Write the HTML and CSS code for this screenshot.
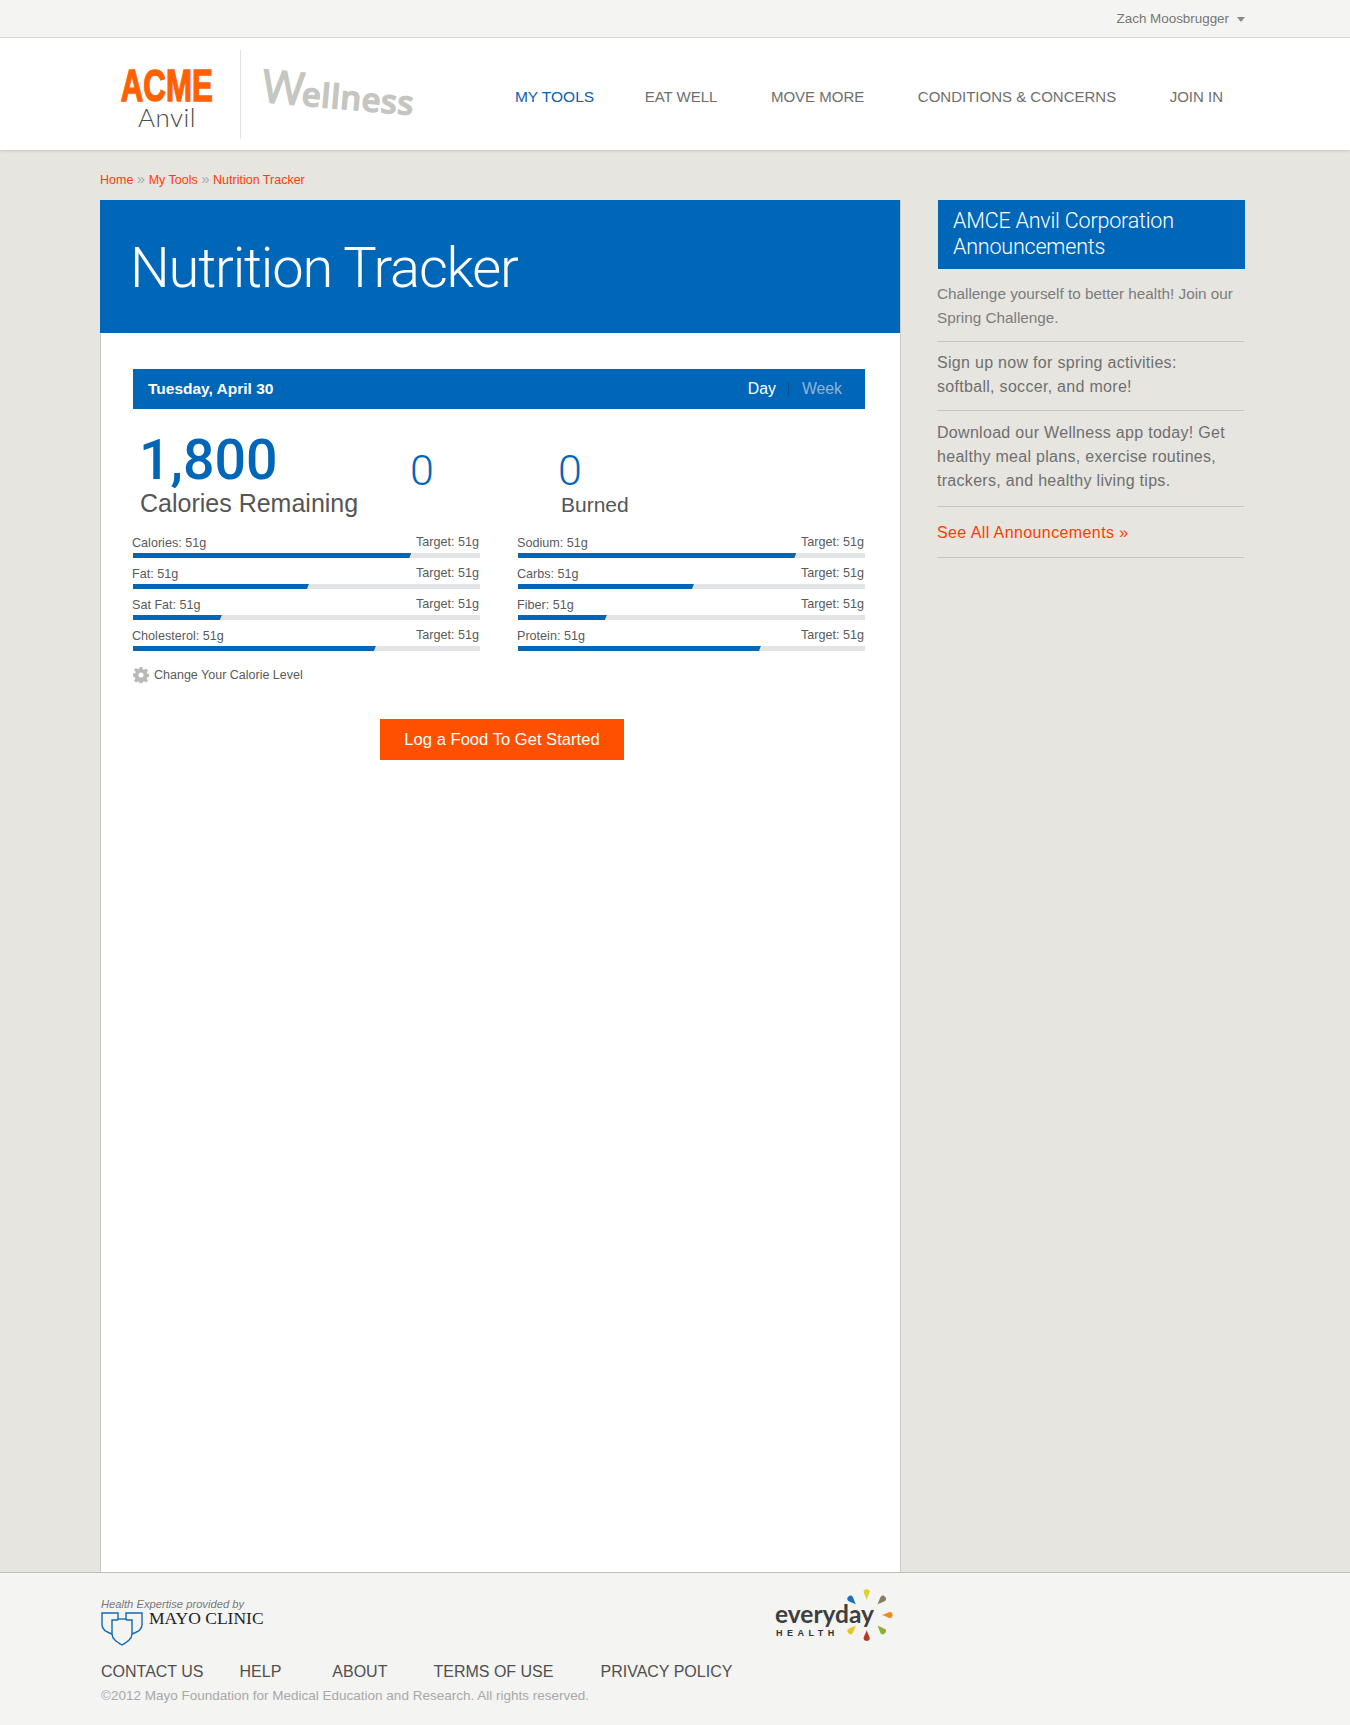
FILE: index.html
```html
<!DOCTYPE html>
<html lang="en">
<head>
<meta charset="utf-8">
<title>Nutrition Tracker</title>
<link rel="stylesheet" href="styles.css">
</head>
<body>
<div class="topbar">
  <span class="user">Zach Moosbrugger</span>
  <span class="caret"></span>
</div>
<header class="header">
  <div class="logo">
    <div class="logo-acme"><span>ACME</span></div>
    <div class="logo-anvil">Anvil</div>
  </div>
  <div class="logo-well"><span class="wellness"><span class="well-w">W</span>ellness</span></div>
  <nav class="nav">
    <a class="nav-item active">MY TOOLS</a>
    <a class="nav-item">EAT WELL</a>
    <a class="nav-item">MOVE MORE</a>
    <a class="nav-item">CONDITIONS &amp; CONCERNS</a>
    <a class="nav-item">JOIN IN</a>
  </nav>
</header>
<div class="page">
  <div class="crumbs"><a>Home</a> <i>»</i> <a>My Tools</a> <i>»</i> <a>Nutrition Tracker</a></div>
  <div class="columns">
    <main class="card">
      <div class="hero"><h1>Nutrition Tracker</h1></div>
      <div class="card-body">
        <div class="datebar">
          <strong>Tuesday, April 30</strong>
          <div class="range"><span class="day">Day</span><span class="sep"></span><span class="week">Week</span></div>
        </div>
        <div class="stats">
          <div class="stat-main">
            <div class="big">1,800</div>
            <div class="big-label">Calories Remaining</div>
          </div>
          <div class="stat-small"><div class="num">0</div></div>
          <div class="stat-small"><div class="num">0</div><div class="small-label">Burned</div></div>
        </div>
        <div class="meters">
          <div class="meter"><div class="meter-text"><span>Calories: 51g</span><span class="target">Target: 51g</span></div><div class="track"><div class="fill" style="width:80.2%"></div></div></div>
          <div class="meter"><div class="meter-text"><span>Sodium: 51g</span><span class="target">Target: 51g</span></div><div class="track"><div class="fill" style="width:80.2%"></div></div></div>
          <div class="meter"><div class="meter-text"><span>Fat: 51g</span><span class="target">Target: 51g</span></div><div class="track"><div class="fill" style="width:50.7%"></div></div></div>
          <div class="meter"><div class="meter-text"><span>Carbs: 51g</span><span class="target">Target: 51g</span></div><div class="track"><div class="fill" style="width:50.7%"></div></div></div>
          <div class="meter"><div class="meter-text"><span>Sat Fat: 51g</span><span class="target">Target: 51g</span></div><div class="track"><div class="fill" style="width:25.6%"></div></div></div>
          <div class="meter"><div class="meter-text"><span>Fiber: 51g</span><span class="target">Target: 51g</span></div><div class="track"><div class="fill" style="width:25.6%"></div></div></div>
          <div class="meter"><div class="meter-text"><span>Cholesterol: 51g</span><span class="target">Target: 51g</span></div><div class="track"><div class="fill" style="width:70%"></div></div></div>
          <div class="meter"><div class="meter-text"><span>Protein: 51g</span><span class="target">Target: 51g</span></div><div class="track"><div class="fill" style="width:70%"></div></div></div>
        </div>
        <div class="change">
          <svg class="gear" viewBox="0 0 16 16" width="16" height="16"><path fill="#b9b9b9" fill-rule="evenodd" d="M6.6 0h2.8l.4 2.2 1.3.6 1.9-1.3 2 2-1.3 1.9.6 1.3 2.2.4v2.8l-2.2.4-.6 1.3 1.3 1.9-2 2-1.9-1.3-1.3.6-.4 2.2H6.6l-.4-2.2-1.3-.6-1.9 1.3-2-2 1.3-1.9-.6-1.3L0 9.4V6.6l2.2-.4.6-1.3L1 3l2-2 1.9 1.3 1.3-.6zM8 5.5a2.5 2.5 0 1 0 0 5 2.5 2.5 0 0 0 0-5z"/></svg>
          <span>Change Your Calorie Level</span>
        </div>
        <div class="cta"><a class="button">Log a Food To Get Started</a></div>
      </div>
    </main>
    <aside class="side">
      <h2>AMCE Anvil Corporation Announcements</h2>
      <p class="note first">Challenge yourself to better health! Join our Spring Challenge.</p>
      <p class="note second">Sign up now for spring activities:<br>softball, soccer, and more!</p>
      <p class="note third">Download our Wellness app today! Get healthy meal plans, exercise routines, trackers, and healthy living tips.</p>
      <p class="note more"><a>See All Announcements »</a></p>
    </aside>
  </div>
</div>
<footer class="footer">
  <div class="foot-logos">
    <div class="mayo">
      <div class="mayo-line">Health Expertise provided by</div>
      <div class="mayo-row">
        <svg class="shield" viewBox="0 0 42 34" width="42" height="34"><g fill="none" stroke="#0f6ab4" stroke-width="1.4"><path d="M17 8V1H1v12c0 4 4 7 10 9"/><path d="M25 8V1h16v12c0 4-4 7-10 9"/><path d="M17 7h8"/><path d="M17 8h-6v14c0 5 5 8 10 11 5-3 10-6 10-11V8h-6"/></g></svg>
        <span class="mayo-name">MAYO CLINIC</span>
      </div>
    </div>
    <div class="everyday">
      <div class="ev-name">everyday</div>
      <div class="ev-health">HEALTH</div>
      <svg class="petals" viewBox="0 0 60 60" width="60" height="60">
        <g transform="translate(26.7 30)">
          <path class="p-yellow" d="M0-15C1-19 3.5-22 3-24 2.5-26.5-2.5-26.5-3-24-3.5-22-1-19 0-15Z"/>
          <path class="p-brown" transform="rotate(45)" d="M0-15C1-19 3.5-22 3-24 2.5-26.5-2.5-26.5-3-24-3.5-22-1-19 0-15Z"/>
          <path class="p-orange" transform="rotate(90)" d="M0-15C1-19 3.5-22 3-24 2.5-26.5-2.5-26.5-3-24-3.5-22-1-19 0-15Z"/>
          <path class="p-green" transform="rotate(135)" d="M0-15C1-19 3.5-22 3-24 2.5-26.5-2.5-26.5-3-24-3.5-22-1-19 0-15Z"/>
          <path class="p-red" transform="rotate(180)" d="M0-15C1-19 3.5-22 3-24 2.5-26.5-2.5-26.5-3-24-3.5-22-1-19 0-15Z"/>
          <path class="p-gold" transform="rotate(225)" d="M0-15C1-19 3.5-22 3-24 2.5-26.5-2.5-26.5-3-24-3.5-22-1-19 0-15Z"/>
          <path class="p-blue" transform="rotate(315)" d="M0-15C1-19 3.5-22 3-24 2.5-26.5-2.5-26.5-3-24-3.5-22-1-19 0-15Z"/>
        </g>
      </svg>
    </div>
  </div>
  <nav class="foot-nav">
    <a>CONTACT US</a><a>HELP</a><a>ABOUT</a><a>TERMS OF USE</a><a>PRIVACY POLICY</a>
  </nav>
  <div class="copy">©2012 Mayo Foundation for Medical Education and Research. All rights reserved.</div>
</footer>
</body>
</html>
```
FILE: styles.css
```css
* { box-sizing: border-box; }
html, body { height: 100%; }
body {
  margin: 0;
  min-height: 1725px;
  display: flex;
  flex-direction: column;
  background: #e6e5e0;
  font-family: "Liberation Sans", Arial, sans-serif;
  color: #555;
}
a { text-decoration: none; }
.topbar {
  height: 38px;
  flex: none;
  background: #f4f4f2;
  border-bottom: 1px solid #dfdfd8;
  display: flex;
  justify-content: flex-end;
  align-items: center;
  padding: 0 105px 1px 0;
  font-size: 13.4px;
  color: #777;
}
.caret {
  width: 0;
  height: 0;
  margin: 3px 0 0 8px;
  border-left: 4.5px solid transparent;
  border-right: 4.5px solid transparent;
  border-top: 5px solid #888;
}
.header {
  height: 112px;
  flex: none;
  background: #fff;
  box-shadow: 0 1px 3px rgba(0,0,0,.14);
  display: flex;
  align-items: center;
  padding: 0 127px 0 122px;
  position: relative;
}
.logo { width: 119px; height: 89px; padding-top: 18px; border-right: 1px solid #e2e2e0; flex: none; }
.logo-acme {
  width: 90px;
  display: flex;
  justify-content: center;
  font-weight: 700;
  font-size: 44px;
  line-height: 36px;
  color: #ff6100;
  -webkit-text-stroke: 1.4px #ff6100;
  white-space: nowrap;
}
.logo-acme span { display: block; transform: scaleX(.71); }
.logo-anvil {
  width: 90px;
  text-align: center;
  font-family: Lato, sans-serif;
  font-weight: 300;
  font-size: 26px;
  line-height: 26px;
  letter-spacing: .5px;
  color: #4b4b4b;
}
.logo-well { width: 156px; padding: 0 0 14px 21px; flex: none; }
.wellness {
  display: inline-block;
  font-family: "Open Sans", sans-serif;
  font-weight: 600;
  font-size: 33px;
  line-height: 40px;
  letter-spacing: .4px;
  color: #c5c5c1;
  -webkit-text-stroke: 1.2px #c5c5c1;
  transform: rotate(5deg);
  transform-origin: left center;
  white-space: nowrap;
}
.well-w { font-size: 46px; font-weight: 400; letter-spacing: -2px; }
.nav { margin-left: auto; display: flex; align-items: baseline; gap: 53.5px; font-size: 15px; color: #6e6e6e; padding-top: 5px; }
.nav-item.active { color: #0a5fb0; font-size: 15.5px; margin-right: -3px; }
.page { flex: 1; display: flex; flex-direction: column; padding-left: 100px; width: 1245px; }
.crumbs { height: 50px; padding-top: 22px; font-size: 12.5px; line-height: 17px; color: #ff3c00; white-space: nowrap; }
.crumbs i { font-style: normal; color: #a9a9a4; font-size: 15px; line-height: 12px; }
.columns { flex: 1; display: grid; grid-template-columns: 801px 307px; column-gap: 37px; }
.card { background: #fff; border: 1px solid #c9c9c5; border-bottom: 0; display: flex; flex-direction: column; }
.hero { height: 133px; margin: -1px 0 0 -1px; background: #0066b8; display: flex; align-items: center; padding: 2px 0 0 30px; }
.hero h1 { margin: 0; font-family: Roboto, sans-serif; font-weight: 300; font-size: 56px; line-height: 70px; letter-spacing: -1.2px; color: #fff; white-space: nowrap; }
.card-body { padding: 36px 35px 0 32px; }
.datebar {
  height: 40px;
  background: #0066b8;
  color: #fff;
  display: flex;
  justify-content: space-between;
  align-items: center;
  padding: 0 23px 0 15px;
  font-size: 15.5px;
}
.range { display: flex; align-items: center; font-size: 15.8px; }
.sep { width: 1px; height: 14px; background: #0a4f92; margin: 0 13px 0 12px; }
.week { color: #8fb4dc; }
.stats { display: grid; grid-template-columns: 270px 148px 1fr; height: 124px; padding: 25px 0 0 7px; }
.big { font-family: Roboto, sans-serif; font-size: 55.5px; line-height: 54px; font-weight: 500; color: #0066b8; margin-left: -1px; }
.big-label { font-size: 25px; line-height: 30px; color: #555; white-space: nowrap; }
.num { font-family: Roboto, sans-serif; font-weight: 300; font-size: 43px; line-height: 42px; color: #0066b8; margin-top: 15px; }
.small-label { font-size: 21px; line-height: 26px; color: #555; margin: 1px 0 0 3px; }
.meters { display: grid; grid-template-columns: 347px 347px; column-gap: 38px; }
.meter { height: 31px; }
.meter-text { display: flex; justify-content: space-between; font-size: 12.6px; line-height: 16px; height: 20px; padding: 2px 1px 0 0; color: #5a5a5a; margin-left: -1px; }
.target { margin-top: -1px; }
.track { height: 5px; background: #e2e4e6; }
.fill { height: 5px; background: #0066b8; clip-path: polygon(0 0, 100% 0, calc(100% - 2px) 100%, 0 100%); }
.change { display: flex; align-items: center; gap: 5px; margin-top: 6px; height: 24px; font-size: 12.5px; color: #5a5a5a; }
.gear { flex: none; }
.cta { display: flex; justify-content: center; padding: 32px 0 0 6px; }
.button { width: 244px; height: 41px; background: #ff5000; color: #fff; font-size: 16.6px; line-height: 41px; text-align: center; }
.side h2 {
  margin: 0;
  background: #0066b8;
  color: #fff;
  font-family: Roboto, sans-serif;
  font-weight: 300;
  font-size: 21.5px;
  line-height: 26px;
  letter-spacing: -.2px;
  padding: 8px 15px 9px;
}
.note { margin: 0 1px 0 -1px; border-bottom: 1px solid #c6c6c2; font-size: 16px; line-height: 24px; letter-spacing: .3px; color: #6f6f6f; }
.note.first { color: #7c7c7c; font-size: 15.3px; letter-spacing: 0; padding: 13px 0 11px; }
.note.second { padding: 9px 0 11px; }
.note.third { padding: 10px 0 13px; }
.note.more { padding: 14px 0 12px; letter-spacing: .4px; }
.note.more a { color: #ff3c00; }
.footer { height: 153px; flex: none; background: #f4f4f2; border-top: 1px solid #bdbdb9; padding: 25px 0 0 101px; position: relative; }
.foot-logos { width: 794px; height: 63px; display: flex; justify-content: space-between; }
.mayo-line { font-style: italic; font-size: 11.2px; line-height: 13px; color: #777; }
.mayo-row { display: flex; align-items: flex-start; gap: 6px; margin-top: 1px; }
.shield { flex: none; }
.mayo-name { font-family: "Liberation Serif", serif; font-size: 17.5px; line-height: 13px; color: #222; white-space: nowrap; }
.everyday { position: relative; width: 120px; padding-top: 3px; }
.ev-name { font-family: Lato, sans-serif; font-weight: 700; font-size: 24.5px; line-height: 26px; color: #3e3e3e; }
.ev-health { font-size: 9px; line-height: 12px; font-weight: 700; letter-spacing: 4.5px; color: #333; margin: 0 0 0 1px; }
.petals { position: absolute; left: 65px; top: -13px; }
.p-yellow { fill: #d9d62a; }
.p-brown { fill: #8c7c62; }
.p-orange { fill: #f58a1f; }
.p-green { fill: #8cb030; }
.p-red { fill: #b8392a; }
.p-gold { fill: #e8c42a; }
.p-blue { fill: #1f6fb8; }
.foot-nav { display: flex; font-size: 16px; line-height: 22px; color: #4f4f4f; white-space: nowrap; }
.foot-nav a:nth-child(2) { margin-left: 36px; }
.foot-nav a:nth-child(3) { margin-left: 51px; }
.foot-nav a:nth-child(4) { margin-left: 46px; }
.foot-nav a:nth-child(5) { margin-left: 47px; }
.copy { font-size: 13.5px; line-height: 16px; color: #a8a8a8; margin-top: 5px; }
```
